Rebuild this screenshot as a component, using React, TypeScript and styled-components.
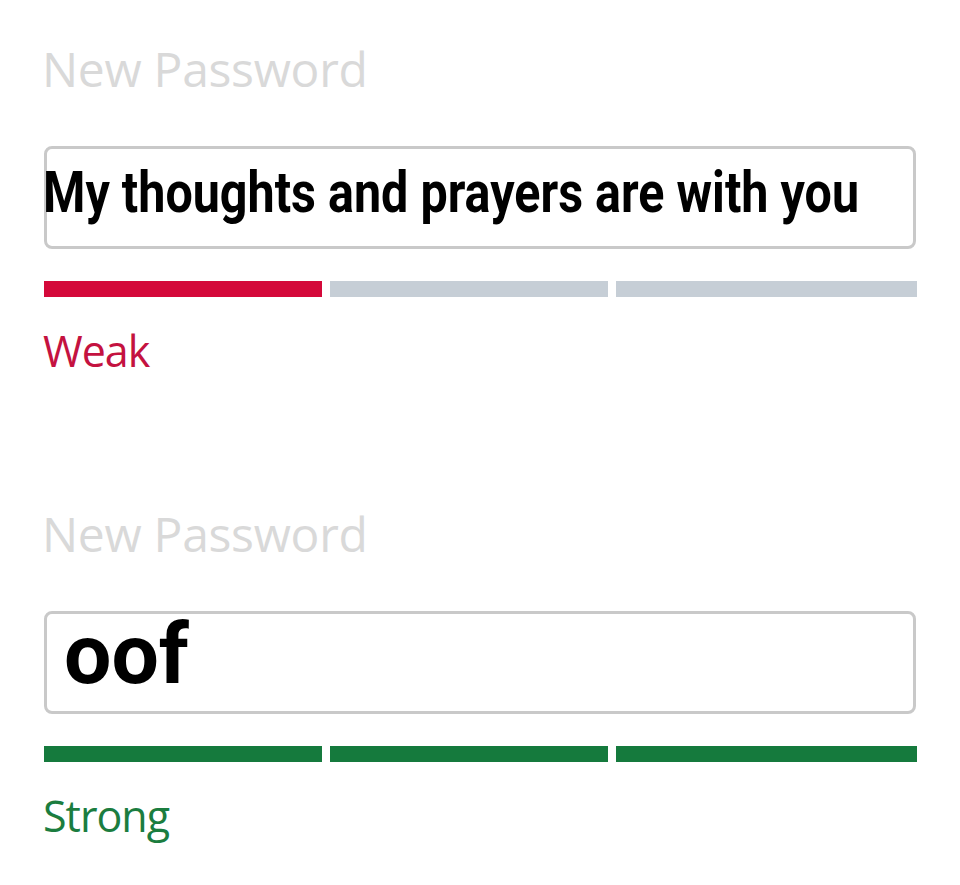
import styled, { createGlobalStyle } from "styled-components";

const GlobalStyle = createGlobalStyle`
  html, body {
    margin: 0;
    padding: 0;
    background: #fff;
  }
`;

const COLORS = {
  weak: "#d4093a",
  weakText: "#c41240",
  strong: "#157a3d",
  strongText: "#1b7d3f",
  empty: "#c6ced6",
  label: "#d9d9d9",
  border: "#c9c9c9",
};

const Page = styled.div`
  width: 960px;
  min-height: 885px;
  box-sizing: border-box;
  padding: 41px 43px 0 44px;
  display: flex;
  flex-direction: column;
`;

const Section = styled.section<{ $spaced?: boolean }>`
  display: flex;
  flex-direction: column;
  margin-top: ${({ $spaced }) => ($spaced ? "129px" : "0")};
`;

const Label = styled.label`
  font-family: "Open Sans", sans-serif;
  font-size: 48px;
  line-height: 56px;
  color: ${COLORS.label};
  letter-spacing: -0.3px;
  margin-left: -2px;
`;

const Field = styled.div<{ $padTop: number; $padLeft: number }>`
  margin-top: 49px;
  width: 872px;
  height: 103px;
  box-sizing: border-box;
  border: 3px solid ${COLORS.border};
  border-radius: 8px;
  padding: ${({ $padTop, $padLeft }) => `${$padTop}px 0 0 ${$padLeft}px`};
  overflow: visible;
  white-space: nowrap;
`;

const Typed = styled.span<{ $big?: boolean }>`
  display: inline-block;
  font-family: Roboto, "Liberation Sans", sans-serif;
  font-weight: 700;
  color: #000;
  font-size: ${({ $big }) => ($big ? "84px" : "57px")};
  line-height: ${({ $big }) => ($big ? "64px" : "57px")};
  transform-origin: left center;
  transform: ${({ $big }) => ($big ? "none" : "scaleX(0.85)")};
  margin-left: ${({ $big }) => ($big ? "0" : "-4px")};
`;

const Meter = styled.div`
  margin-top: 32px;
  display: grid;
  grid-template-columns: 278px 278px 301px;
  column-gap: 8px;
`;

const Segment = styled.div<{ $color: string }>`
  height: 16px;
  background: ${({ $color }) => $color};
`;

const Verdict = styled.div<{ $color: string }>`
  margin-top: 28px;
  font-family: "Open Sans", sans-serif;
  font-size: 43px;
  line-height: 52px;
  letter-spacing: -1px;
  margin-left: -1px;
  color: ${({ $color }) => $color};
`;

type Strength = "weak" | "strong";

const levels: Record<Strength, { filled: number; bar: string; text: string; name: string }> = {
  weak: { filled: 1, bar: COLORS.weak, text: COLORS.weakText, name: "Weak" },
  strong: { filled: 3, bar: COLORS.strong, text: COLORS.strongText, name: "Strong" },
};

function PasswordField({
  value,
  strength,
  big,
  spaced,
}: {
  value: string;
  strength: Strength;
  big?: boolean;
  spaced?: boolean;
}) {
  const level = levels[strength];
  return (
    <Section $spaced={spaced}>
      <Label>New Password</Label>
      <Field $padTop={big ? 9 : 15} $padLeft={big ? 17 : 0}>
        <Typed $big={big}>{value}</Typed>
      </Field>
      <Meter>
        {[0, 1, 2].map((i) => (
          <Segment key={i} $color={i < level.filled ? level.bar : COLORS.empty} />
        ))}
      </Meter>
      <Verdict $color={level.text}>{level.name}</Verdict>
    </Section>
  );
}

export default function App() {
  return (
    <>
      <GlobalStyle />
      <Page>
        <PasswordField value="My thoughts and prayers are with you" strength="weak" />
        <PasswordField value="oof" strength="strong" big spaced />
      </Page>
    </>
  );
}
